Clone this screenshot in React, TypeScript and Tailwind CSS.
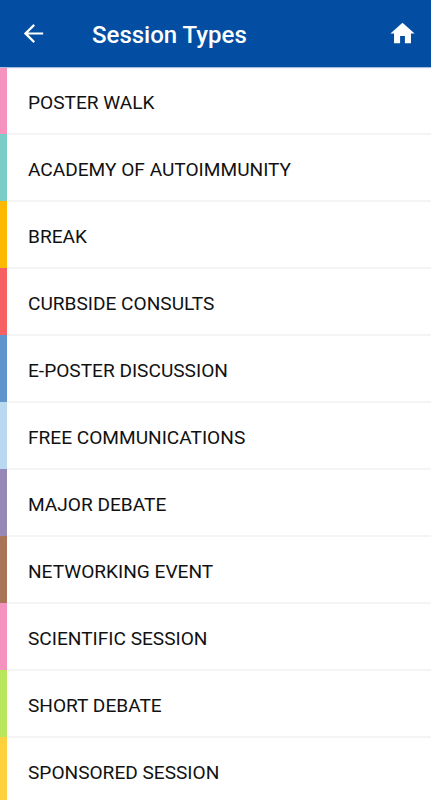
import React from "react";

interface SessionType {
  name: string;
  color: string;
}

const sessionTypes: SessionType[] = [
  { name: "POSTER WALK", color: "bg-[#f692be]" },
  { name: "ACADEMY OF AUTOIMMUNITY", color: "bg-[#79cdc6]" },
  { name: "BREAK", color: "bg-[#fcb900]" },
  { name: "CURBSIDE CONSULTS", color: "bg-[#f66063]" },
  { name: "E-POSTER DISCUSSION", color: "bg-[#6095cb]" },
  { name: "FREE COMMUNICATIONS", color: "bg-[#b9d9f0]" },
  { name: "MAJOR DEBATE", color: "bg-[#9787b6]" },
  { name: "NETWORKING EVENT", color: "bg-[#a87457]" },
  { name: "SCIENTIFIC SESSION", color: "bg-[#f692be]" },
  { name: "SHORT DEBATE", color: "bg-[#b9e75c]" },
  { name: "SPONSORED SESSION", color: "bg-[#ffd13c]" },
];

const Header = () => (
  <header className="flex h-[68px] shrink-0 items-center border-b border-[#a3bfe3] bg-[#034ea2] text-white">
    <button aria-label="Back" className="ml-[19px]">
      <svg viewBox="0 0 24 24" className="h-[29px] w-[29px]" fill="currentColor">
        <path d="M20 11.1H7.6l5.6-5.6L12 4.2 4 12l8 7.8 1.2-1.3-5.6-5.6H20z" />
      </svg>
    </button>
    <h1 className="ml-[44px] grow pt-[3px] text-[24px] font-medium leading-7">Session Types</h1>
    <button aria-label="Home" className="mr-[14px]">
      <svg viewBox="0 0 24 24" className="h-[29px] w-[29px]" fill="currentColor">
        <path d="M10 20v-6h4v6h5v-8h3L12 3 2 12h3v8z" />
      </svg>
    </button>
  </header>
);

export default function App() {
  return (
    <div className="flex h-[800px] w-[431px] flex-col overflow-hidden bg-white font-['Roboto',sans-serif]">
      <Header />
      <ul className="shrink-0">
        {sessionTypes.map((session) => (
          <li key={session.name} className="flex h-[67px] first:h-[66px]">
            <span className={`w-[7px] shrink-0 ${session.color}`} />
            <span className="flex grow items-center border-y border-[#f4f4f4] pl-[21px] pt-[5px] text-[19.1px] text-[#111111]">
              {session.name}
            </span>
          </li>
        ))}
      </ul>
    </div>
  );
}
